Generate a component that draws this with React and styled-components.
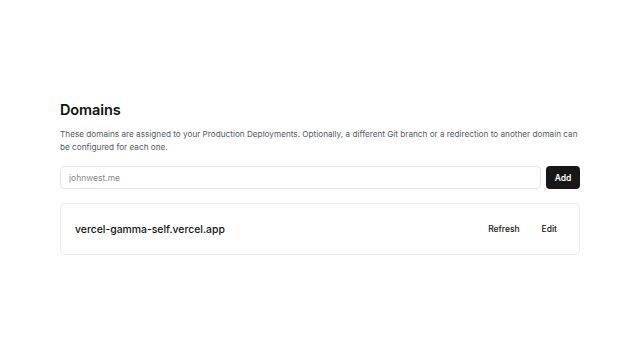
import styled, { createGlobalStyle } from 'styled-components'

const GlobalStyle = createGlobalStyle`
  html, body {
    margin: 0;
    padding: 0;
    background: #ffffff;
    font-family: Inter, "Noto Sans", sans-serif;
    color: #111111;
  }
`

const Page = styled.div`
  width: 640px;
  height: 357px;
  box-sizing: border-box;
  padding: 100px 60px 0;
`

const Title = styled.h1`
  margin: 0;
  font-size: 14.5px;
  font-weight: 600;
  line-height: 20px;
  letter-spacing: -0.1px;
`

const Description = styled.p`
  margin: 8px 0 0;
  font-size: 8.2px;
  line-height: 13px;
  color: #555a62;
`

const AddRow = styled.form`
  display: flex;
  gap: 5px;
  margin-top: 12px;
`

const DomainInput = styled.input`
  flex: 1;
  height: 23px;
  box-sizing: border-box;
  border: 1px solid #e6e6e6;
  border-radius: 4px;
  padding: 0 8px;
  font-family: inherit;
  font-size: 8.5px;
  color: #111;
  outline: none;
  &::placeholder {
    color: #8a8a8a;
  }
`

const AddButton = styled.button`
  width: 34px;
  height: 23px;
  border: none;
  border-radius: 4px;
  background: #171717;
  color: #ffffff;
  font-family: inherit;
  font-size: 8.5px;
  font-weight: 600;
  cursor: pointer;
`

const DomainCard = styled.div`
  display: flex;
  align-items: center;
  justify-content: space-between;
  height: 52px;
  box-sizing: border-box;
  margin-top: 14px;
  padding: 0 14px;
  border: 1px solid #ececec;
  border-radius: 5px;
`

const DomainName = styled.span`
  font-size: 10.4px;
  font-weight: 500;
`

const Actions = styled.div`
  display: flex;
  gap: 6px;
`

const ActionButton = styled.button`
  border: none;
  background: transparent;
  padding: 4px 8px;
  font-family: inherit;
  font-size: 8.5px;
  font-weight: 500;
  color: #111;
  cursor: pointer;
`

export default function App() {
  return (
    <>
      <GlobalStyle />
      <Page>
        <Title>Domains</Title>
        <Description>
          These domains are assigned to your Production Deployments. Optionally, a different Git branch or a
          redirection to another domain can be configured for each one.
        </Description>
        <AddRow onSubmit={e => e.preventDefault()}>
          <DomainInput placeholder="johnwest.me" />
          <AddButton type="submit">Add</AddButton>
        </AddRow>
        <DomainCard>
          <DomainName>vercel-gamma-self.vercel.app</DomainName>
          <Actions>
            <ActionButton>Refresh</ActionButton>
            <ActionButton>Edit</ActionButton>
          </Actions>
        </DomainCard>
      </Page>
    </>
  )
}
